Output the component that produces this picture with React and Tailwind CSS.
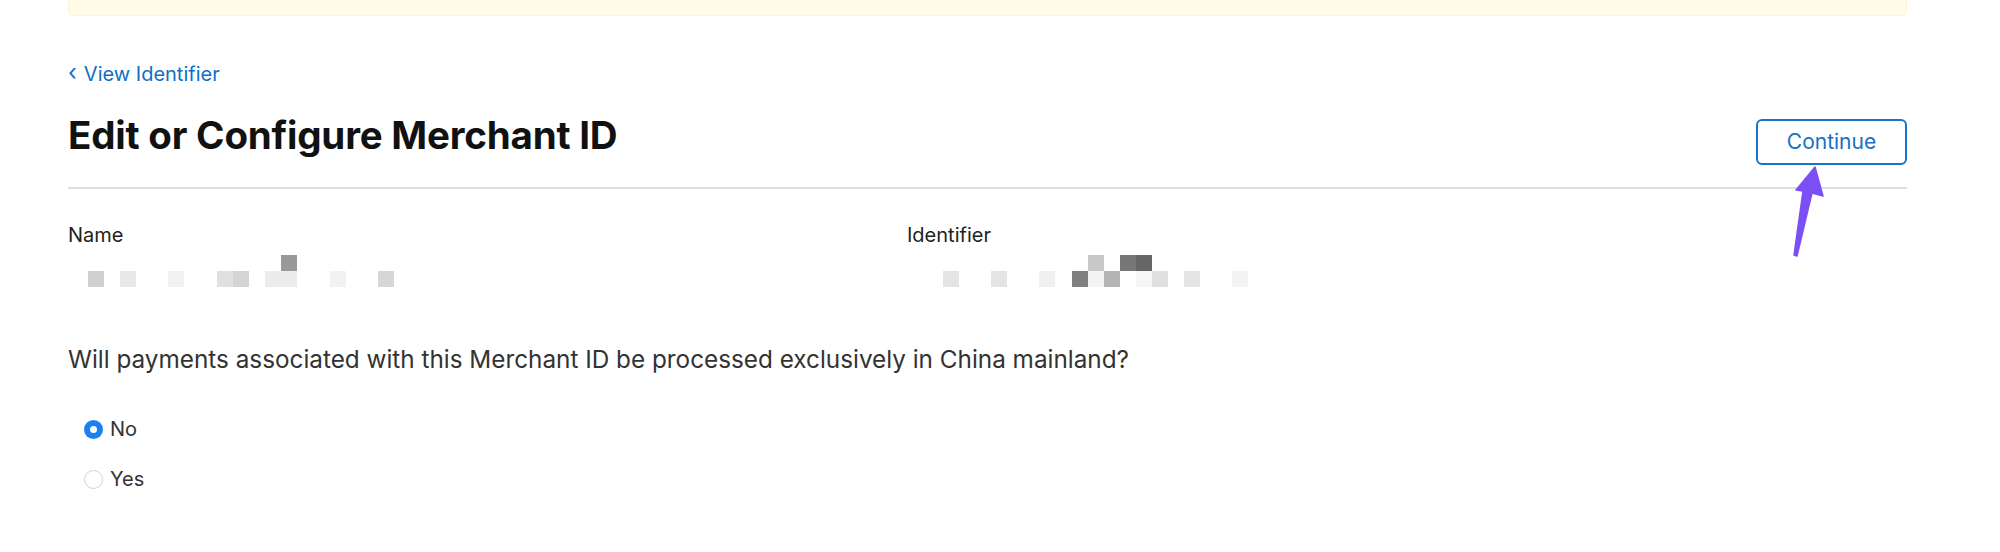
import { useState } from "react";

const nameBlocks = [
  { x: 88, top: false, c: "#d0d0d0" },
  { x: 120, top: false, c: "#e8e8e8" },
  { x: 168, top: false, c: "#f2f2f2" },
  { x: 217, top: false, c: "#e0e0e0" },
  { x: 233, top: false, c: "#d4d4d4" },
  { x: 265, top: false, c: "#ececec" },
  { x: 281, top: false, c: "#ececec" },
  { x: 281, top: true, c: "#999999" },
  { x: 330, top: false, c: "#f2f2f2" },
  { x: 378, top: false, c: "#d6d6d6" },
];

const idBlocks = [
  { x: 943, top: false, c: "#e4e4e4" },
  { x: 991, top: false, c: "#e4e4e4" },
  { x: 1039, top: false, c: "#f0f0f0" },
  { x: 1072, top: false, c: "#808080" },
  { x: 1088, top: false, c: "#f4f4f4" },
  { x: 1088, top: true, c: "#c8c8c8" },
  { x: 1104, top: false, c: "#b4b4b4" },
  { x: 1120, top: true, c: "#777777" },
  { x: 1136, top: true, c: "#666666" },
  { x: 1136, top: false, c: "#f6f6f6" },
  { x: 1152, top: false, c: "#e0e0e0" },
  { x: 1184, top: false, c: "#e4e4e4" },
  { x: 1232, top: false, c: "#f4f4f4" },
];

// redacted value, drawn as pixel blocks; x is page x, shifted by the column start
function Pixelated({ blocks, origin }) {
  return (
    <div className="relative h-[32px] mt-[8px]">
      {blocks.map((b, i) => (
        <div
          key={i}
          className="absolute w-[16px] h-[16px]"
          style={{ left: b.x - origin, top: b.top ? 0 : 16, background: b.c }}
        />
      ))}
    </div>
  );
}

function Radio({ checked, label, onClick }) {
  return (
    <label className="h-[24px] flex items-center gap-[7px] cursor-pointer" onClick={onClick}>
      {checked ? (
        <span className="w-[19px] h-[19px] rounded-full bg-[#1b7ff5] flex items-center justify-center">
          <span className="w-[7px] h-[7px] rounded-full bg-white" />
        </span>
      ) : (
        <span className="w-[19px] h-[19px] rounded-full border border-[#d2d2d2] bg-white" />
      )}
      <span className="text-[20px] leading-[24px] text-[#333]">{label}</span>
    </label>
  );
}

export default function App() {
  const [choice, setChoice] = useState("no");

  return (
    <div className="relative w-[2000px] h-[552px] bg-white overflow-hidden font-['Inter',sans-serif]">
      <div className="ml-[68px] w-[1839px]">
        {/* notice banner, cut off at top */}
        <div className="h-[16px] bg-[#fffbe6] border border-t-0 border-[#fcf6cc] rounded-b-[6px]" />

        <a href="#" className="mt-[46px] flex items-center gap-[7px] text-[20px] leading-[24px] text-[#0f6fc6]">
          <span className="text-[23px] leading-none -mt-[3px]">‹</span>
          View Identifier
        </a>

        <div className="mt-[26px] flex items-start justify-between">
          <h1 className="text-[38.5px] leading-[46px] font-bold text-[#111] tracking-[-0.2px]">
            Edit or Configure Merchant ID
          </h1>
          <button className="mt-[7px] w-[151px] h-[46px] rounded-[6px] border-2 border-[#1a73c8] text-[#1a6fc4] text-[21px]">
            Continue
          </button>
        </div>

        <div className="mt-[22px] h-[2px] bg-[#dedede]" />

        <div className="mt-[34px] flex">
          <div className="w-[839px]">
            <div className="text-[20px] leading-[24px] text-[#222]">Name</div>
            <Pixelated blocks={nameBlocks} origin={68} />
          </div>
          <div>
            <div className="text-[20px] leading-[24px] text-[#222]">Identifier</div>
            <Pixelated blocks={idBlocks} origin={907} />
          </div>
        </div>

        <p className="mt-[57px] text-[24.3px] leading-[30px] text-[#333]">
          Will payments associated with this Merchant ID be processed exclusively in China mainland?
        </p>

        <div className="mt-[43px] pl-[16px] flex flex-col gap-[26px]">
          <Radio checked={choice === "no"} label="No" onClick={() => setChoice("no")} />
          <Radio checked={choice === "yes"} label="Yes" onClick={() => setChoice("yes")} />
        </div>
      </div>

      {/* annotation arrow pointing at Continue */}
      <svg className="absolute left-0 top-0 pointer-events-none" width="2000" height="552">
        <path
          d="M1815 167 L1823 196 L1812 193 L1797 256 L1794 255 L1803 191 L1796 190 Z"
          fill="#7b4ff5"
          stroke="#7b4ff5"
          strokeWidth="1.5"
          strokeLinejoin="round"
        />
      </svg>
    </div>
  );
}
